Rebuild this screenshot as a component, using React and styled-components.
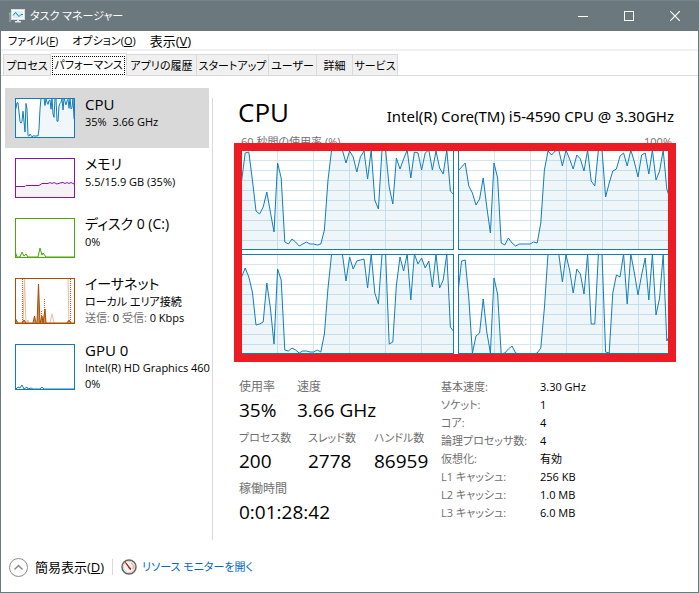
import React from "react";
import styled, { createGlobalStyle } from "styled-components";

const GlobalStyle = createGlobalStyle`
    * {
        box-sizing: border-box;
    }

    body {
        margin: 0;
        background: #fff;
        color: #000;
        font-family: "Open Sans", "Noto Sans CJK JP", sans-serif;
        font-size: 11px;
        line-height: 16px;
        font-feature-settings: "palt";
    }

    button {
        margin: 0;
        padding: 0;
        border: 0;
        background: none;
        color: inherit;
        font: inherit;
        font-feature-settings: inherit;
        white-space: nowrap;
    }
`;

const Window = styled.div`
    display: flex;
    flex-direction: column;
    min-height: 100vh;
    border: 1px solid #6b797e;
    border-top-color: #75858a;
`;

const TitleBar = styled.header`
    display: flex;
    align-items: center;
    height: 30px;
    padding-left: 8px;
    background: #6b797e;
    color: #fff;
`;

const Title = styled.h1`
    flex: 1;
    margin: 0 0 0 5px;
    font-size: 11px;
    font-weight: 400;
`;

const WindowButton = styled.button`
    display: flex;
    align-items: center;
    justify-content: center;
    width: 46px;
    height: 30px;
`;

const MenuBar = styled.nav`
    display: flex;
    gap: 14px;
    height: 20px;
    padding: 2px 0 0 7px;
    border-bottom: 2px solid #f0f0f0;
`;

const MenuItem = styled.button`
    font-size: ${(props) => (props.$large ? "13px" : "11px")};
`;

const TabList = styled.div`
    display: flex;
    align-items: flex-end;
    height: 25px;
    padding-left: 2px;
    border-bottom: 1px solid #d9d9d9;
`;

const Tab = styled.button`
    width: ${(props) => props.$width}px;
    height: 21px;
    padding-top: 1px;
    border: 1px solid #d9d9d9;
    border-bottom: 0;
    border-left-width: ${(props) => (props.$first ? "1px" : "0")};
    background: #f0f0f0;
    overflow: hidden;

    &[aria-selected="true"] {
        height: 23px;
        margin-bottom: -1px;
        padding: 1px;
        background: #fff;
    }
`;

const TabFocus = styled.span`
    display: block;
    height: 19px;
    border: 1px dotted #000;
    line-height: 16px;
`;

const Body = styled.div`
    display: flex;
    flex: 1;
    padding-left: 4px;
`;

const Sidebar = styled.aside`
    flex: none;
    width: 208px;
    padding-top: 12px;
`;

const SidebarInner = styled.div`
    position: relative;
    height: 100%;

    &::after {
        content: "";
        position: absolute;
        top: 10px;
        right: 0;
        bottom: 0;
        width: 1px;
        background: #d9d9d9;
    }
`;

const Resource = styled.button`
    display: flex;
    gap: 10px;
    width: 204px;
    padding: 10px 0 10px 10px;
    background: ${(props) => (props.$active ? "#d9d9d9" : "transparent")};
    text-align: left;
`;

const Thumb = styled.svg`
    flex: none;
    display: block;
    width: 60px;
    height: ${(props) => props.$height}px;
    border: 1px solid ${(props) => props.$color};
    background: #fff;
`;

const ResourceText = styled.span`
    display: block;
    margin: -4px 0;
    min-width: 0;
`;

const ResourceName = styled.span`
    display: block;
    font-size: ${(props) => (props.$latin ? "15px" : "14px")};
    line-height: 20px;
`;

const ResourceInfo = styled.span`
    display: block;
    white-space: pre;
`;

const Muted = styled.span`
    color: #707070;
`;

const Main = styled.main`
    flex: 1;
    min-width: 0;
    padding: 20px 24px 0 25px;
`;

const Heading = styled.div`
    display: flex;
    align-items: baseline;
    justify-content: space-between;
    height: 38px;
`;

const ResourceTitle = styled.h2`
    margin: 0;
    font-size: 26px;
    font-weight: 400;
    line-height: 32px;
`;

const Processor = styled.span`
    font-family: "Noto Sans", sans-serif;
    font-size: 15px;
`;

const ChartCaption = styled.div`
    display: flex;
    justify-content: space-between;
    padding: 0 2px 0 3px;
    color: #707070;
`;

const Cores = styled.section`
    position: relative;
    display: grid;
    grid-template-columns: 1fr 1fr;
    gap: 4px;

    /* highlight frame drawn over the four graphs */
    &::after {
        content: "";
        position: absolute;
        inset: -7px -2px -8px -4px;
        border: 8px solid #ed1c24;
    }
`;

const Graph = styled.svg`
    display: block;
    width: 100%;
    height: 100px;
    border: 1px solid #117dbb;
`;

const Stats = styled.section`
    display: flex;
    margin-top: 23px;
`;

const Counters = styled.div`
    display: grid;
    gap: 5px;
    align-content: start;
    width: 203px;
    padding-left: 1px;
`;

const CounterRow = styled.dl`
    display: grid;
    grid-template-columns: ${(props) => props.$columns};
    margin: 0;
`;

const Label = styled.dt`
    color: #707070;
    font-size: ${(props) => (props.$large ? "12px" : "11px")};
    line-height: 20px;
    white-space: nowrap;
`;

const Value = styled.dd`
    margin: 0;
    font-size: 19px;
    line-height: 26px;
    white-space: nowrap;
`;

const Details = styled.dl`
    display: grid;
    grid-template-columns: 99px auto;
    grid-auto-rows: 18px;
    align-content: start;
    margin: 1px 0 0;
    line-height: 18px;
    white-space: nowrap;
`;

const DetailLabel = styled.dt`
    color: #707070;
`;

const DetailValue = styled.dd`
    margin: 0;
`;

const Footer = styled.footer`
    display: flex;
    align-items: center;
    height: 52px;
    padding: 2px 0 0 8px;
`;

const FewerDetails = styled.button`
    display: flex;
    align-items: center;
    gap: 7px;
    padding-right: 8px;
    font-size: 13px;
`;

const MonitorLink = styled.a`
    display: flex;
    align-items: center;
    gap: 5px;
    padding-left: 8px;
    border-left: 1px solid #d9d9d9;
    color: #0066cc;
    text-decoration: none;
`;

const cores = [
    [
        60, 69, 97, 98, 70, 39, 36, 43, 58, 38, 18, 87, 72, 8, 6, 11, 8, 4, 6, 8,
        6, 6, 5, 6, 20, 70, 100, 100, 100, 100, 87, 99, 93, 78, 93, 99, 71, 100, 50, 41,
        100, 100, 63, 46, 92, 81, 91, 100, 72, 98, 97, 80, 97, 100, 80, 99, 82, 76, 100, 59, 55,
    ],
    [
        79, 83, 87, 64, 57, 45, 51, 72, 43, 17, 87, 72, 7, 5, 12, 7, 4, 6, 6, 6,
        6, 8, 7, 27, 80, 99, 95, 99, 100, 84, 100, 91, 81, 95, 91, 79, 100, 69, 64, 100,
        100, 53, 67, 79, 81, 94, 97, 84, 100, 88, 73, 95, 97, 76, 100, 70, 79, 100, 61, 50, 50,
    ],
    [
        65, 77, 86, 77, 62, 29, 30, 32, 71, 46, 10, 85, 74, 4, 3, 6, 4, 1, 3, 3,
        2, 2, 4, 2, 20, 66, 100, 100, 100, 100, 73, 97, 85, 93, 94, 95, 66, 100, 61, 50,
        100, 100, 10, 12, 69, 97, 83, 100, 54, 100, 90, 96, 86, 93, 67, 100, 66, 74, 100, 27, 22,
    ],
    [
        62, 93, 94, 56, 1, 18, 21, 55, 22, 1, 76, 60, 0, 1, 5, 8, 1, 0, 0, 0,
        0, 0, 1, 6, 46, 100, 100, 100, 100, 72, 99, 84, 61, 85, 80, 60, 100, 30, 30, 100,
        100, 2, 1, 61, 79, 77, 100, 50, 100, 81, 59, 79, 96, 54, 100, 39, 56, 100, 13, 20, 20,
    ],
];

const tabs = [
    { name: "プロセス", width: 48 },
    { name: "パフォーマンス", width: 76, selected: true },
    { name: "アプリの履歴", width: 70 },
    { name: "スタートアップ", width: 72 },
    { name: "ユーザー", width: 48 },
    { name: "詳細", width: 36 },
    { name: "サービス", width: 45 },
];

const details = [
    ["基本速度:", "3.30 GHz"],
    ["ソケット:", "1"],
    ["コア:", "4"],
    ["論理プロセッサ数:", "4"],
    ["仮想化:", "有効"],
    ["L1 キャッシュ:", "256 KB"],
    ["L2 キャッシュ:", "1.0 MB"],
    ["L3 キャッシュ:", "6.0 MB"],
];

const toPoints = (values, width, height) =>
    values.map((v, i) => `${(i * width) / 60},${height - (v * height) / 100}`).join(" ");

const CoreGraph = ({ values, shift }) => {
    const points = toPoints(values, 216, 100);

    return (
        <Graph viewBox="1 1 214 98" preserveAspectRatio="none">
            {[1, 2, 3, 4, 5, 6, 7, 8, 9].map((n) => (
                <path key={n} d={`M0 ${n * 10 + 0.5}H216`} stroke="#d3e6f1" />
            ))}
            {[1, 2, 3, 4, 5].map((n) => (
                <path key={n} d={`M${n * 36 + shift} 0V100`} stroke="#d3e6f1" />
            ))}
            <polygon points={`0,100 ${points} 216,100`} fill="#117dbb" fillOpacity="0.07" />
            <polyline points={points} fill="none" stroke="#117dbb" />
        </Graph>
    );
};

const CpuThumb = () => {
    const mean = cores[0].map((v, i) => (v + cores[1][Math.max(i - 1, 0)] + cores[2][i]) / 3);
    const points = toPoints(mean, 60, 40);

    return (
        <Thumb $height={40} $color="#117dbb" viewBox="1 1 58 38">
            <polygon points={`0,40 ${points} 60,40`} fill="#f1f6fa" />
            <polyline points={points} fill="none" stroke="#117dbb" />
        </Thumb>
    );
};

const MemoryThumb = () => (
    <Thumb $height={40} $color="#8b12ae" viewBox="1 1 58 38">
        <path d="M0 28.5H10L11 27.5H24L27 25.5H33L35 24.5L37 25.5L39 24.5L42 26L45 25L48 24.5L50 25.5L52 24.5L54 25.5L56 24.5L60 26.5V40H0Z" fill="#f4f2f4" stroke="#8b12ae" />
    </Thumb>
);

const DiskThumb = () => (
    <Thumb $height={40} $color="#4da60c" viewBox="1 1 58 38">
        <path d="M0 33L2 39H5L7 34L9 38L11 36L13 39H23L25 30L27 37L28 35L31 39H60V42H0Z" fill="#eff7e9" stroke="#4da60c" />
    </Thumb>
);

const NetworkThumb = () => (
    <Thumb $height={46} $color="#a74f01" viewBox="1 1 58 44">
        <path d="M8 46L9.500 1L11 46M53 1L54 46M35 45L37 36L39 45M12 45L13 42L14 45" fill="none" stroke="#f0b79a" />
        <path d="M7.500 1V45M55.500 1V45M29.500 21V45M26.500 33V45" stroke="#dc5a26" strokeDasharray="1 1" />
        <path d="M0 40L3 45H7L9 42L11 45H18L19.500 38L21 45H22L23.500 6L25 45L27 38L28 45L30 31L31 45H52L54 42L56 45H60V48H0Z" fill="#c98d5e" stroke="#a74f01" />
    </Thumb>
);

const GpuThumb = () => (
    <Thumb $height={46} $color="#117dbb" viewBox="1 1 58 44">
        <path d="M1 45L3 43L5 44L7 41L9 45L12 43L13 45L16 44L18 45H25L27 43L29 45H60" fill="none" stroke="#117dbb" />
    </Thumb>
);

const AppIcon = () => (
    <svg width="16" height="16" viewBox="0 0 16 16">
        <path d="M0 4.500L2 4V14H0Z" fill="#8d9799" />
        <path d="M0.500 5V6.500" stroke="#46e04b" />
        <rect x="2.500" y="1.500" width="13" height="10" fill="#fff" stroke="#d9dfe1" />
        <rect x="4" y="3" width="10" height="7" fill="#d9effb" />
        <path d="M4 7.500L6.500 4.500L10 8.500L12 6.500H14" fill="none" stroke="#147eb8" />
        <path d="M8 12H10V13H12V14.500H6V13H8Z" fill="#dfe4e5" />
    </svg>
);

const GaugeIcon = () => (
    <svg width="16" height="16" viewBox="0 0 16 16">
        <circle cx="8" cy="8" r="7" fill="#f6f6f4" stroke="#66665f" strokeWidth="1.500" />
        <circle cx="8" cy="8" r="5.500" fill="none" stroke="#d6d5cd" />
        <path d="M10 4A5 5 0 0 1 12 10" fill="none" stroke="#e39a73" />
        <path d="M4.500 3.500L10 10L9 10.500Z" fill="#d5141c" stroke="#d5141c" />
    </svg>
);

const App = () => {
    return (
        <>
            <GlobalStyle />
            <Window>
                <TitleBar>
                    <AppIcon />
                    <Title>タスク マネージャー</Title>
                    <WindowButton aria-label="最小化">
                        <svg width="10" height="10" viewBox="0 0 10 10">
                            <path d="M0 5.500H10" stroke="#fff" />
                        </svg>
                    </WindowButton>
                    <WindowButton aria-label="最大化">
                        <svg width="10" height="10" viewBox="0 0 10 10">
                            <rect x="0.500" y="0.500" width="9" height="9" fill="none" stroke="#fff" />
                        </svg>
                    </WindowButton>
                    <WindowButton aria-label="閉じる">
                        <svg width="10" height="10" viewBox="0 0 10 10">
                            <path d="M0 0L10 10M10 0L0 10" stroke="#fff" strokeWidth="1.200" />
                        </svg>
                    </WindowButton>
                </TitleBar>

                <MenuBar>
                    <MenuItem>ファイル(<u>F</u>)</MenuItem>
                    <MenuItem>オプション(<u>O</u>)</MenuItem>
                    <MenuItem $large>表示(<u>V</u>)</MenuItem>
                </MenuBar>

                <TabList role="tablist">
                    {tabs.map((tab, i) => (
                        <Tab key={tab.name} role="tab" aria-selected={!!tab.selected} $width={tab.width} $first={i === 0}>
                            {tab.selected ? <TabFocus>{tab.name}</TabFocus> : tab.name}
                        </Tab>
                    ))}
                </TabList>

                <Body>
                    <Sidebar>
                        <SidebarInner>
                            <Resource $active>
                                <CpuThumb />
                                <ResourceText>
                                    <ResourceName $latin>CPU</ResourceName>
                                    <ResourceInfo>35%  3.66 GHz</ResourceInfo>
                                </ResourceText>
                            </Resource>
                            <Resource>
                                <MemoryThumb />
                                <ResourceText>
                                    <ResourceName>メモリ</ResourceName>
                                    <ResourceInfo>5.5/15.9 GB (35%)</ResourceInfo>
                                </ResourceText>
                            </Resource>
                            <Resource>
                                <DiskThumb />
                                <ResourceText>
                                    <ResourceName>ディスク 0 (C:)</ResourceName>
                                    <ResourceInfo>0%</ResourceInfo>
                                </ResourceText>
                            </Resource>
                            <Resource>
                                <NetworkThumb />
                                <ResourceText>
                                    <ResourceName>イーサネット</ResourceName>
                                    <ResourceInfo>ローカル エリア接続</ResourceInfo>
                                    <ResourceInfo>
                                        <Muted>送信:</Muted> 0 <Muted>受信:</Muted> 0 Kbps
                                    </ResourceInfo>
                                </ResourceText>
                            </Resource>
                            <Resource>
                                <GpuThumb />
                                <ResourceText>
                                    <ResourceName $latin>GPU 0</ResourceName>
                                    <ResourceInfo>Intel(R) HD Graphics 460</ResourceInfo>
                                    <ResourceInfo>0%</ResourceInfo>
                                </ResourceText>
                            </Resource>
                        </SidebarInner>
                    </Sidebar>

                    <Main>
                        <Heading>
                            <ResourceTitle>CPU</ResourceTitle>
                            <Processor>Intel(R) Core(TM) i5-4590 CPU @ 3.30GHz</Processor>
                        </Heading>
                        <ChartCaption>
                            <span>60 秒間の使用率 (%)</span>
                            <span>100%</span>
                        </ChartCaption>
                        <Cores>
                            {cores.map((values, i) => (
                                <CoreGraph key={i} values={values} shift={i % 2 ? 0.5 : 3.5} />
                            ))}
                        </Cores>

                        <Stats>
                            <Counters>
                                <CounterRow $columns="58px auto">
                                    <div>
                                        <Label $large>使用率</Label>
                                        <Value>35%</Value>
                                    </div>
                                    <div>
                                        <Label $large>速度</Label>
                                        <Value>3.66 GHz</Value>
                                    </div>
                                </CounterRow>
                                <CounterRow $columns="69px 66px auto">
                                    <div>
                                        <Label>プロセス数</Label>
                                        <Value>200</Value>
                                    </div>
                                    <div>
                                        <Label>スレッド数</Label>
                                        <Value>2778</Value>
                                    </div>
                                    <div>
                                        <Label>ハンドル数</Label>
                                        <Value>86959</Value>
                                    </div>
                                </CounterRow>
                                <CounterRow $columns="auto">
                                    <div>
                                        <Label $large>稼働時間</Label>
                                        <Value>0:01:28:42</Value>
                                    </div>
                                </CounterRow>
                            </Counters>
                            <Details>
                                {details.map(([name, value]) => (
                                    <React.Fragment key={name}>
                                        <DetailLabel>{name}</DetailLabel>
                                        <DetailValue>{value}</DetailValue>
                                    </React.Fragment>
                                ))}
                            </Details>
                        </Stats>
                    </Main>
                </Body>

                <Footer>
                    <FewerDetails>
                        <svg width="19" height="19" viewBox="0 0 19 19">
                            <circle cx="9.500" cy="9.500" r="9" fill="#fff" stroke="#8a8a8a" />
                            <path d="M5.500 11.500L9.500 7.500L13.500 11.500" fill="none" stroke="#8a8a8a" strokeWidth="1.500" />
                        </svg>
                        <span>簡易表示(<u>D</u>)</span>
                    </FewerDetails>
                    <MonitorLink href="#">
                        <GaugeIcon />
                        リソース モニターを開く
                    </MonitorLink>
                </Footer>
            </Window>
        </>
    );
};

export default App;
